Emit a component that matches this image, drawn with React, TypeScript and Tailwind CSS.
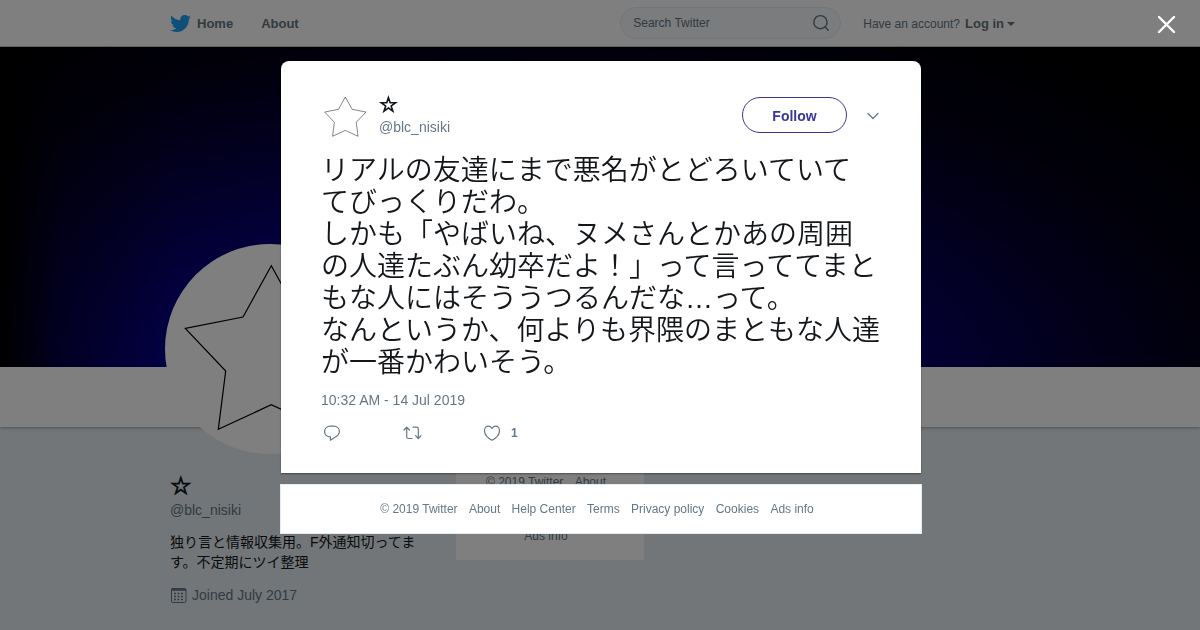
import { FaTwitter } from "react-icons/fa";

const tweetLines = [
  "リアルの友達にまで悪名がとどろいていて",
  "てびっくりだわ。",
  "しかも「やばいね、ヌメさんとかあの周囲",
  "の人達たぶん幼卒だよ！」って言っててまと",
  "もな人にはそううつるんだな…って。",
  "なんというか、何よりも界隈のまともな人達",
  "が一番かわいそう。",
];

const footerLinks = [
  "About",
  "Help Center",
  "Terms",
  "Privacy policy",
  "Cookies",
  "Ads info",
];

function Star({ className, stroke }: { className: string; stroke: number }) {
  return (
    <svg viewBox="0 0 200 200" className={className} aria-hidden="true">
      <path
        d="M101.3 16.7 73 68 15.3 79.3 55.7 122 48.3 180.3 101.3 155.7 154.3 180.3 146.9 122 187.3 79.3 129.6 68Z"
        fill="none"
        stroke="#000"
        strokeWidth={stroke}
      />
    </svg>
  );
}

function FooterLinks() {
  return (
    <>
      <span className="mr-2 inline-block">© 2019 Twitter</span>{" "}
      {footerLinks.map((label) => (
        <span key={label}>
          <a href="#" className="mr-2 inline-block">
            {label}
          </a>{" "}
        </span>
      ))}
    </>
  );
}

function Header() {
  return (
    <header className="h-[47px] border-b border-black/25 bg-white">
      <div className="mx-auto flex h-full max-w-[860px] items-center pr-[15px] text-[13px] font-bold text-[#66757f]">
        <nav className="flex items-center pt-px">
          <a href="#" className="flex items-center gap-[6px]">
            <FaTwitter className="h-[21px] w-[21px] text-[#1da1f2]" />
            Home
          </a>
          <a href="#" className="ml-7">
            About
          </a>
        </nav>
        <form className="ml-auto flex h-8 w-[221px] items-center rounded-full border border-[#e6ecf0] bg-[#f5f8fa] pr-[10px] pl-3">
          <input
            type="text"
            aria-label="Search Twitter"
            placeholder="Search Twitter"
            className="min-w-0 flex-1 bg-transparent text-xs font-normal outline-none placeholder:text-[#66757f]"
          />
          <button type="button" aria-label="Search">
            <svg
              viewBox="0 0 18 18"
              className="h-[18px] w-[18px]"
              fill="none"
              stroke="#66757f"
              strokeWidth="1.4"
              strokeLinecap="round"
            >
              <circle cx="8.400" cy="8.200" r="6.600" />
              <path d="m13.200 13 3 3.300" />
            </svg>
          </button>
        </form>
        <button type="button" className="ml-[22px] flex items-center pt-px">
          <span className="mr-[5px] text-xs font-normal">Have an account?</span>
          <span className="text-[13px]">Log in</span>
          <span className="ml-[3px] border-x-4 border-t-4 border-x-transparent border-t-[#66757f]" />
        </button>
      </div>
    </header>
  );
}

function Profile() {
  return (
    <>
      <div className="h-80 bg-black bg-[linear-gradient(90deg,#000000_0%,rgba(0,0,0,0.35)_5%,transparent_15%),radial-gradient(ellipse_72%_130%_at_40%_112%,#0000a8_0%,#0404a0_32%,#07006c_50%,#05003c_68%,#020018_85%,#000000_108%)]" />
      <div className="relative h-[60px] bg-white shadow-[0_1px_3px_rgba(0,0,0,0.3)]">
        <div className="mx-auto max-w-[860px]">
          <div className="absolute -top-[123px] -ml-[5px] rounded-full bg-white p-[5px]">
            <Star className="h-[200px] w-[200px]" stroke={1.2} />
          </div>
        </div>
      </div>
      <div className="mx-auto flex max-w-[860px] items-start text-sm text-[#657786]">
        <aside className="w-[250px] pt-11">
          <h1 className="h-[29px] font-['DejaVu_Sans',sans-serif] text-2xl leading-[30px] font-bold text-[#14171a] [-webkit-text-stroke:1px_#14171a]">
            ☆
          </h1>
          <p className="leading-5">@blc_nisiki</p>
          <p className="mt-3 leading-5 text-[#14171a]">
            独り言と情報収集用。F外通知切ってます。不定期にツイ整理
          </p>
          <p className="mt-[13px] flex items-center gap-[5px] leading-5">
            <svg viewBox="0 0 17 17" className="h-[17px] w-[17px]" fill="none" stroke="#657786" aria-hidden="true">
              <rect x="1.500" y="1.500" width="14.500" height="14" rx="1.500" />
              <path d="M1.500 2.500h14.500" strokeWidth="2.500" />
              <path
                d="M7.500 6.500h2m1.500 0h2M4 9.500h2m1.500 0h2m1.500 0h2M4 12.500h2m1.500 0h2m1.500 0h2M4 6.500h2"
                strokeWidth="1.500"
              />
            </svg>
            Joined July 2017
          </p>
        </aside>
        <div className="ml-9 w-[188px] bg-white px-[10px] pt-[46px] pb-[15px] text-center text-xs leading-[18px]">
          <FooterLinks />
        </div>
      </div>
    </>
  );
}

function Tweet() {
  return (
    <article className="mx-auto max-w-[640px] rounded-t-lg bg-white px-10 pt-8 pb-[30px] shadow-[0_1px_2px_rgba(0,0,0,0.4)]">
      <div className="flex h-[53px] items-start">
        <Star className="h-12 w-12" stroke={2} />
        <div className="ml-[10px]">
          <div className="h-6 font-['DejaVu_Sans',sans-serif] text-[21px] leading-6 font-bold text-[#14171a] [-webkit-text-stroke:1px_#14171a]">
            ☆
          </div>
          <div className="text-sm leading-5 text-[#657786]">@blc_nisiki</div>
        </div>
        <button
          type="button"
          className="mt-1 ml-auto h-9 w-[105px] rounded-full border border-[#3b3794] pt-px text-sm font-bold text-[#3b3794]"
        >
          Follow
        </button>
        <button type="button" aria-label="More" className="mt-4 ml-[18px]">
          <svg
            viewBox="0 0 16 14"
            className="h-[14px] w-4"
            fill="none"
            stroke="#657786"
            strokeWidth="1.300"
            strokeLinecap="round"
          >
            <path d="m3 4.500 5 5 5-5" />
          </svg>
        </button>
      </div>
      <p className="mt-[9px] text-[28px] leading-8 font-[350] text-[#14171a]">
        {tweetLines.map((line) => (
          <span key={line} className="block whitespace-nowrap">
            {line}
          </span>
        ))}
      </p>
      <p className="mt-[11px] text-sm leading-5 text-[#657786]">10:32 AM - 14 Jul 2019</p>
      <div className="mt-[13px] flex h-5 items-center text-xs font-bold text-[#657786]">
        <button type="button" aria-label="Reply" className="w-20 pl-[2px]">
          <svg viewBox="0 0 18 18" className="h-[18px] w-[18px]" fill="none" stroke="#657786" strokeWidth="1.200" strokeLinejoin="round">
            <path d="M7.600 2.200h2.800c3.600 0 6 2.300 6 5.300 0 2.500-1.600 4.200-4 5.600L7.400 16.200v-3.400C3.800 12.800 1.600 10.500 1.600 7.500c0-3 2.400-5.300 6-5.300Z" />
          </svg>
        </button>
        <button type="button" aria-label="Retweet" className="w-20 pl-[2px]">
          <svg
            viewBox="0 0 20 18"
            className="h-[18px] w-5"
            fill="none"
            stroke="#657786"
            strokeWidth="1.200"
            strokeLinecap="round"
            strokeLinejoin="round"
          >
            <path d="M1 6l2.700-2.800L6.400 6M3.700 3.400v9.300q0 1.800 1.800 1.800H9M18 11.700l-2.700 2.800-2.700-2.800M15.300 14.300V5q0-1.800-1.800-1.800H10" />
          </svg>
        </button>
        <button type="button" aria-label="Like" className="flex items-center gap-[10px] pl-[2px]">
          <svg viewBox="0 0 18 18" className="h-[18px] w-[18px]" fill="none" stroke="#657786" strokeWidth="1.200" strokeLinejoin="round">
            <path d="M9 16.300C5.500 14.400 1.500 10.700 1.500 6.700c0-2.600 1.800-4.500 4-4.500 1.600 0 2.800.9 3.500 2.400.7-1.500 1.900-2.400 3.500-2.400 2.200 0 4 1.900 4 4.500 0 4-4 7.700-7.500 9.600Z" />
          </svg>
          <span>1</span>
        </button>
      </div>
    </article>
  );
}

export default function App() {
  return (
    <div className="h-screen overflow-hidden bg-[#e6ecf0] font-['Liberation_Sans','Noto_Sans_CJK_JP',sans-serif]">
      <Header />
      <Profile />
      <div role="dialog" aria-label="Tweet" className="fixed inset-0 bg-black/50 pt-[61px] pl-[2px]">
        <Tweet />
        <footer className="mx-auto mt-[11px] max-w-[642px] border border-[#e6ecf0] bg-white py-[15px] text-center text-xs leading-[18px] text-[#657786]">
          <FooterLinks />
        </footer>
        <button type="button" aria-label="Close" className="absolute top-[14px] right-6">
          <svg viewBox="0 0 20 20" className="h-5 w-5" stroke="#fff" strokeWidth="2.400" strokeLinecap="round">
            <path d="m3 3 15 15m0-15-15 15" />
          </svg>
        </button>
      </div>
    </div>
  );
}
